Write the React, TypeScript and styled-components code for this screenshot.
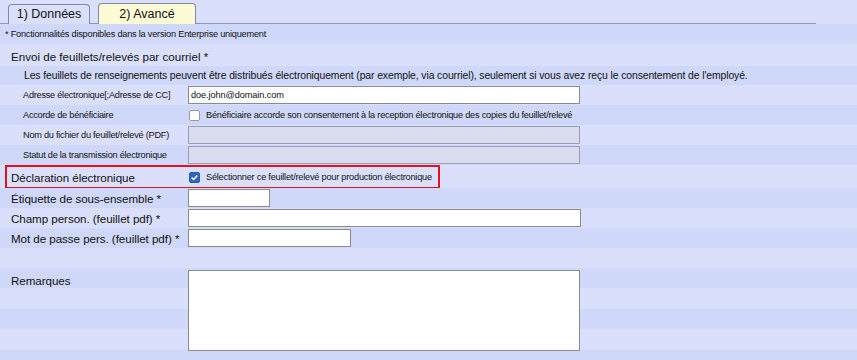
import React from 'react';
import styled, { createGlobalStyle } from 'styled-components';

const LIGHT = '#dae0fb';
const DARK = '#cfd8f8';

const GlobalStyle = createGlobalStyle`
    html, body {
        margin: 0;
        padding: 0;
        background: ${LIGHT};
    }
    body {
        font-family: "Liberation Sans", Arial, sans-serif;
        color: #111;
    }
`;

const Page = styled.div`
    width: 857px;
    height: 360px;
    overflow: hidden;
    background: ${LIGHT};
    display: flex;
    flex-direction: column;
`;

const TabBar = styled.div`
    height: 24px;
    width: 816px;
    box-sizing: border-box;
    display: flex;
    align-items: flex-end;
    gap: 8px;
    padding-left: 8px;
    border-bottom: 1px solid #8c97b2;
`;

const Tab = styled.div<{ $active?: boolean }>`
    height: ${props => props.$active ? "21px" : "20px"};
    box-sizing: border-box;
    width: ${props => props.$active ? "98px" : "82px"};
    display: flex;
    align-items: center;
    justify-content: center;
    font-size: 12.5px;
    color: #111;
    background: ${props => props.$active ? "#fdfbd6" : LIGHT};
    border: 1px solid #7f8aa6;
    border-bottom: none;
    border-radius: 4px 4px 0 0;
    margin-bottom: -1px;
    padding-bottom: 1px;
`;

const Row = styled.div<{ $dark?: boolean, $h?: number }>`
    height: ${props => (props.$h || 20) + "px"};
    flex-shrink: 0;
    display: flex;
    align-items: center;
    background: ${props => props.$dark ? DARK : LIGHT};
`;

const Note = styled.div<{ $indent: number }>`
    padding-left: ${props => props.$indent + "px"};
    font-size: 9.2px;
    letter-spacing: -0.22px;
    white-space: nowrap;
`;

const Info = styled.div`
    padding-left: 24px;
    font-size: 10.4px;
    letter-spacing: -0.1px;
    white-space: nowrap;
`;

const Heading = styled.div`
    padding-left: 11px;
    padding-top: 3px;
    font-size: 11.6px;
    white-space: nowrap;
`;

const SmallLabel = styled.div`
    width: 165px;
    flex-shrink: 0;
    padding-left: 23px;
    font-size: 9.2px;
    letter-spacing: -0.25px;
    white-space: nowrap;
`;

const BigLabel = styled.div<{ $indent?: number, $w?: number }>`
    width: ${props => (props.$w ?? 188) + "px"};
    box-sizing: border-box;
    flex-shrink: 0;
    padding-left: ${props => (props.$indent ?? 11) + "px"};
    font-size: 11.6px;
    letter-spacing: -0.05px;
    white-space: nowrap;
`;

const Field = styled.div<{ $w: number, $disabled?: boolean }>`
    width: ${props => props.$w + "px"};
    height: 18px;
    box-sizing: border-box;
    border: 1px solid ${props => props.$disabled ? "#9a9eae" : "#8b8b8b"};
    background: ${props => props.$disabled ? "#d8dcee" : "#ffffff"};
    font-size: 9.2px;
    letter-spacing: -0.1px;
    padding: 0 2px;
    display: flex;
    align-items: center;
`;

const CheckLine = styled.label`
    display: flex;
    align-items: center;
    gap: 6px;
    font-size: 9.2px;
    letter-spacing: -0.22px;
    white-space: nowrap;
    margin-left: 1px;
`;

const Box = styled.span<{ $checked?: boolean }>`
    width: 11px;
    height: 11px;
    box-sizing: border-box;
    border-radius: 2px;
    border: 1px solid ${props => props.$checked ? "#2a5da8" : "#9a9a9a"};
    background: ${props => props.$checked ? "#2f67b8" : "#ffffff"};
    display: flex;
    align-items: center;
    justify-content: center;
`;

const Highlight = styled.div`
    margin-left: 5px;
    width: 435px;
    height: 24px;
    box-sizing: border-box;
    border: 2px solid #e0141c;
    display: flex;
    align-items: center;
    padding-left: 4px;
    padding-top: 1px;
`;

const RemarksBlock = styled.div`
    flex: 1;
    display: flex;
    align-items: flex-start;
    padding-top: 2px;
    background: repeating-linear-gradient(to bottom, ${DARK} 0px, ${DARK} 20px, ${LIGHT} 20px, ${LIGHT} 41px);
`;

const RemarksLabel = styled(BigLabel)`
    padding-top: 4px;
`;

const TextArea = styled.div`
    width: 392px;
    height: 81px;
    box-sizing: border-box;
    border: 1px solid #8b8b8b;
    background: #fff;
`;

const Check = () => (
    <svg width="9" height="9" viewBox="0 0 9 9">
        <path d="M1.6 4.6 L3.6 6.5 L7.4 2.4" fill="none" stroke="#fff" strokeWidth="1.4" />
    </svg>
);

export default function App() {
    return (
        <Page>
            <GlobalStyle />
            <TabBar>
                <Tab>1) Données</Tab>
                <Tab $active>2) Avancé</Tab>
            </TabBar>
            <Row $dark $h={20}>
                <Note $indent={5}>* Fonctionnalités disponibles dans la version Enterprise uniquement</Note>
            </Row>
            <Row $h={22}>
                <Heading>Envoi de feuillets/relevés par courriel *</Heading>
            </Row>
            <Row $dark $h={19}>
                <Info>Les feuillets de renseignements peuvent être distribués électroniquement (par exemple, via courriel), seulement si vous avez reçu le consentement de l'employé.</Info>
            </Row>
            <Row>
                <SmallLabel>Adresse électronique[;Adresse de CC]</SmallLabel>
                <Field $w={392}>doe.john@domain.com</Field>
            </Row>
            <Row $dark>
                <SmallLabel>Accorde de bénéficiaire</SmallLabel>
                <CheckLine>
                    <Box />
                    Bénéficiaire accorde son consentement à la reception électronique des copies du feuillet/relevé
                </CheckLine>
            </Row>
            <Row>
                <SmallLabel>Nom du fichier du feuillet/relevé (PDF)</SmallLabel>
                <Field $w={392} $disabled />
            </Row>
            <Row $dark>
                <SmallLabel>Statut de la transmission électronique</SmallLabel>
                <Field $w={392} $disabled />
            </Row>
            <Row $h={23}>
                <Highlight>
                    <BigLabel $indent={0} $w={177}>Déclaration électronique</BigLabel>
                    <CheckLine>
                        <Box $checked><Check /></Box>
                        Sélectionner ce feuillet/relevé pour production électronique
                    </CheckLine>
                </Highlight>
            </Row>
            <Row $dark>
                <BigLabel>Étiquette de sous-ensemble *</BigLabel>
                <Field $w={82} />
            </Row>
            <Row>
                <BigLabel>Champ person. (feuillet pdf) *</BigLabel>
                <Field $w={393} />
            </Row>
            <Row $dark>
                <BigLabel>Mot de passe pers. (feuillet pdf) *</BigLabel>
                <Field $w={163} />
            </Row>
            <Row $h={20} />
            <RemarksBlock>
                <RemarksLabel>Remarques</RemarksLabel>
                <TextArea />
            </RemarksBlock>
        </Page>
    );
}
